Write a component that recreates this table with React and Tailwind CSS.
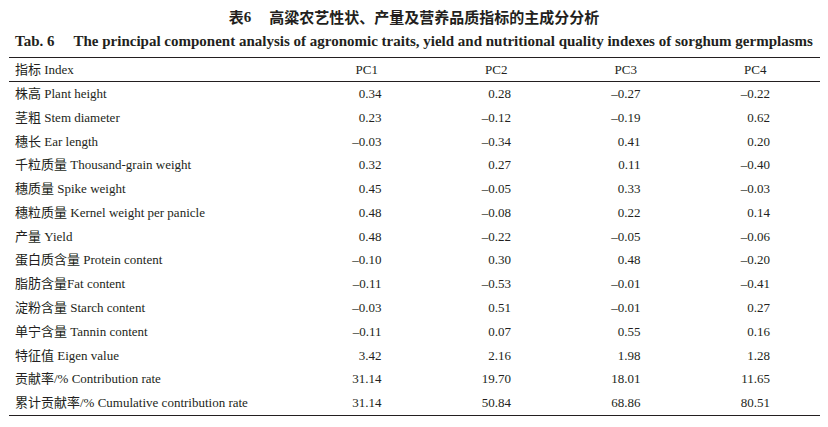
import React from 'react';

const rows = [
  ['株高', 'Plant height', '0.34', '0.28', '–0.27', '–0.22'],
  ['茎粗', 'Stem diameter', '0.23', '–0.12', '–0.19', '0.62'],
  ['穗长', 'Ear length', '–0.03', '–0.34', '0.41', '0.20'],
  ['千粒质量', 'Thousand-grain weight', '0.32', '0.27', '0.11', '–0.40'],
  ['穗质量', 'Spike weight', '0.45', '–0.05', '0.33', '–0.03'],
  ['穗粒质量', 'Kernel weight per panicle', '0.48', '–0.08', '0.22', '0.14'],
  ['产量', 'Yield', '0.48', '–0.22', '–0.05', '–0.06'],
  ['蛋白质含量', 'Protein content', '–0.10', '0.30', '0.48', '–0.20'],
  ['脂肪含量', 'Fat content', '–0.11', '–0.53', '–0.01', '–0.41', true],
  ['淀粉含量', 'Starch content', '–0.03', '0.51', '–0.01', '0.27'],
  ['单宁含量', 'Tannin content', '–0.11', '0.07', '0.55', '0.16'],
  ['特征值', 'Eigen value', '3.42', '2.16', '1.98', '1.28'],
  ['贡献率/%', 'Contribution rate', '31.14', '19.70', '18.01', '11.65'],
  ['累计贡献率/%', 'Cumulative contribution rate', '31.14', '50.84', '68.86', '80.51'],
];

const serif = "font-['Liberation_Serif','Noto_Sans_CJK_SC',serif]";

export default function App() {
  return (
    <div className={`w-[828px] h-[427px] bg-white text-[#231f20] pt-[7px] ${serif}`}>
      {/* Chinese caption */}
      <div className="h-[20px] flex items-center justify-center text-[15px] font-bold leading-[20px]">
        <span className="font-['Noto_Sans_CJK_SC',sans-serif]">表</span>
        <span className="font-['Liberation_Serif',serif]">6</span>
        <span className="ml-[18px] font-['Noto_Sans_CJK_SC',sans-serif]">高粱农艺性状、产量及营养品质指标的主成分分析</span>
      </div>
      {/* English caption */}
      <div className="mt-[4px] h-[20px] pl-[15px] flex items-center text-[15px] font-bold leading-[20px] whitespace-nowrap">
        <span>Tab. 6</span>
        <span className="ml-[19px]">The principal component analysis of agronomic traits, yield and nutritional quality indexes of sorghum germplasms</span>
      </div>

      <div className="mt-[6px] ml-[9px] w-[811px] border-t-[1.3px] border-b-[1.3px] border-[#231f20] text-[13px]">
        <div className="grid grid-cols-[293px_repeat(4,1fr)] h-[24px] items-center border-b-[1.3px] border-[#231f20]">
          <div className="pl-[6px]">指标 Index</div>
          <div className="text-center">PC1</div>
          <div className="text-center">PC2</div>
          <div className="text-center">PC3</div>
          <div className="text-center">PC4</div>
        </div>
        {rows.map((r) => (
          <div key={r[0]} className="grid grid-cols-[293px_repeat(4,1fr)] h-[23.77px] items-center">
            <div className="pl-[6px] whitespace-nowrap">
              {r[0]}
              {r[6] ? '' : ' '}
              {r[1]}
            </div>
            <div className="text-right pr-[50px]">{r[2]}</div>
            <div className="text-right pr-[50px]">{r[3]}</div>
            <div className="text-right pr-[50px]">{r[4]}</div>
            <div className="text-right pr-[50px]">{r[5]}</div>
          </div>
        ))}
      </div>
    </div>
  );
}
